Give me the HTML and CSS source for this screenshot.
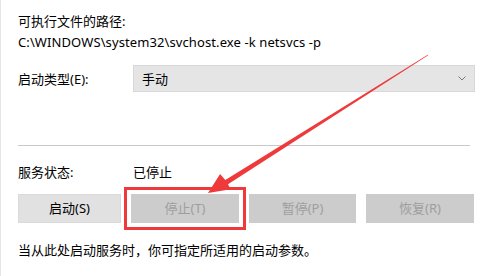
FILE: index.html
```html
<!DOCTYPE html>
<html lang="zh-CN">
<head>
<meta charset="utf-8">
<title>服务属性</title>
<link rel="stylesheet" href="styles.css">
</head>
<body>
<div class="panel">
  <div class="line first">可执行文件的路径:</div>
  <div class="line path">C:\WINDOWS\system32\svchost.exe -k netsvcs -p</div>
  <div class="row startup">
    <div class="label">启动类型(E):</div>
    <div class="select">
      <span>手动</span>
      <svg class="chev" width="8" height="5" viewBox="0 0 8 5"><path d="M0.5 0.5 L4 4 L7.5 0.5" fill="none" stroke="#7a7a7a" stroke-width="1"/></svg>
    </div>
  </div>
  <div class="sep"></div>
  <div class="row status">
    <div class="label">服务状态:</div>
    <div>已停止</div>
  </div>
  <div class="buttons">
    <div class="btn b1">启动(S)</div>
    <div class="btn b2 disabled highlight">停止(T)</div>
    <div class="btn b3 disabled">暂停(P)</div>
    <div class="btn b4 disabled">恢复(R)</div>
  </div>
  <div class="line note">当从此处启动服务时，你可指定所适用的启动参数。</div>
</div>
<svg class="arrow" width="496" height="276" viewBox="0 0 496 276">
  <polygon points="428.2,55.3 427.8,54.7 225.3,180.1 220.1,174.1 208,193 230.7,189.3 228,184.3" fill="#ee3a3a"/>
</svg>
</body>
</html>
```
FILE: styles.css
```css
html, body {
  margin: 0;
  padding: 0;
}
body {
  width: 496px;
  height: 276px;
  background: #ffffff;
  position: relative;
  overflow: hidden;
  font-family: "Noto Sans", "Noto Sans CJK SC", sans-serif;
  font-size: 13px;
  color: #000000;
}
.panel {
  box-sizing: border-box;
  height: 276px;
  border-left: 1px solid #e6e6e6;
  padding: 11px 0 0 17px;
}
.line {
  height: 20px;
  line-height: 20px;
  white-space: nowrap;
}
.path {
  margin-top: 1px;
  letter-spacing: 0.1px;
}
.row {
  display: flex;
  align-items: center;
}
.label {
  width: 115px;
  flex: none;
}
.startup {
  margin-top: 13px;
  height: 27px;
}
.select {
  box-sizing: border-box;
  width: 342px;
  height: 27px;
  background: #e5e5e5;
  border: 1px solid #d8d8d8;
  display: flex;
  align-items: center;
  justify-content: space-between;
  padding: 0 8px 0 8px;
}
.chev {
  display: block;
}
.sep {
  margin-top: 53px;
  width: 452px;
  height: 1px;
  background: #c9c9c9;
}
.status {
  margin-top: 15px;
  height: 20px;
}
.buttons {
  margin-top: 13px;
  display: flex;
  gap: 10px;
}
.btn {
  box-sizing: border-box;
  height: 29px;
  line-height: 27px;
  text-align: center;
  background: #e1e1e1;
  border: 1px solid #dadada;
}
.b1 { width: 103px; }
.b2 { width: 108px; }
.b3 { width: 107px; }
.b4 { width: 108px; }
.disabled {
  background: #cccccc;
  border-color: #cccccc;
  color: #9e9e9e;
}
.highlight {
  outline: 3px solid #ee3a3a;
  outline-offset: 4px;
}
.note {
  margin-top: 17px;
}
.arrow {
  position: absolute;
  left: 0;
  top: 0;
  pointer-events: none;
}
```
